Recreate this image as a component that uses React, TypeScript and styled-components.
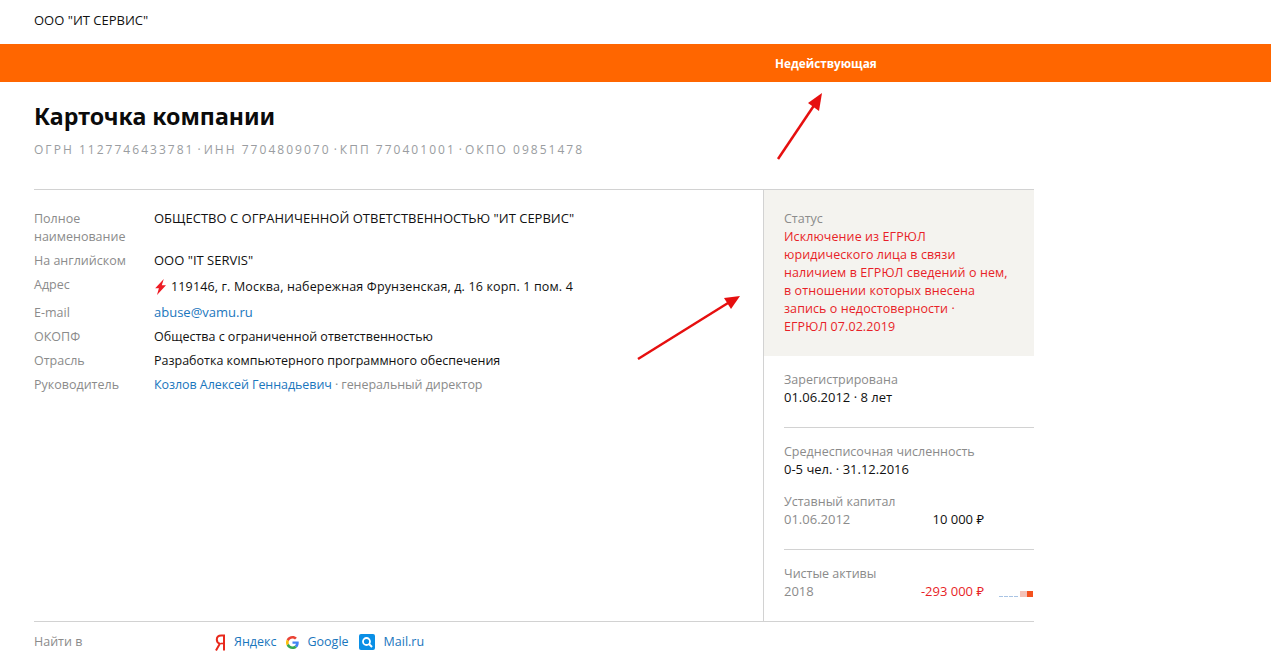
import React from "react";
import styled, { createGlobalStyle } from "styled-components";

const Global = createGlobalStyle`
  html, body { margin: 0; padding: 0; background: #fff; overflow: hidden; }
  body { font-family: "Open Sans", "Noto Sans", sans-serif; font-size: 12.5px; line-height: 18px; color: #111; }
`;

const Page = styled.div`
  position: relative;
  width: 1271px;
  height: 670px;
  overflow: hidden;
`;
const Wrap = styled.div`
  width: 1000px;
  margin-left: 34px;
`;
const TopBar = styled(Wrap)`
  height: 44px;
  display: flex;
  align-items: center;
  padding-bottom: 4px;
  box-sizing: border-box;
  font-size: 13px;
`;
const Banner = styled.div`
  height: 38px;
  background: #ff6600;
  color: #fff;
  font-size: 11.75px;
  font-weight: 700;
  display: flex;
  align-items: center;
  padding-left: 775px;
  box-sizing: border-box;
`;
const Title = styled.h1`
  margin: 18px 0 0;
  font-family: "Noto Sans", sans-serif;
  font-size: 23.2px;
  line-height: 32px;
  font-weight: 700;
  color: #0b0b0b;
`;
const Codes = styled.div`
  margin-top: 9px;
  font-size: 12px;
  letter-spacing: 2.03px;
  color: #9a9da1;
`;
const Sep = styled.span`
  margin: 0 3px;
  letter-spacing: 0;
`;
const Main = styled(Wrap)`
  margin-top: 30px;
  border-top: 1px solid #d2d2d2;
  border-bottom: 1px solid #d2d2d2;
  display: grid;
  grid-template-columns: 730px 270px;
  height: 431px;
`;
const Details = styled.div`
  padding-top: 20px;
  border-right: 1px solid #d2d2d2;
  display: flex;
  flex-direction: column;
  gap: 6px;
`;
const Row = styled.div`
  display: grid;
  grid-template-columns: 120px 1fr;
`;
const Label = styled.div`
  color: #8b8b8b;
`;
const Value = styled.div<{ $caps?: boolean }>`
  display: flex;
  align-items: flex-start;
  white-space: pre;
  font-size: ${(p) => (p.$caps ? "13px" : "inherit")};
  line-height: ${(p) => (p.$caps ? "16px" : "18px")};
  padding-bottom: ${(p) => (p.$caps ? "2px" : "0")};
`;
const AddressValue = styled(Value)`
  padding: 2px 0;
  align-items: center;
  letter-spacing: 0.15px;
`;
const Bolt = styled.svg`
  margin: -1px 4px 0 0;
  flex: none;
`;
const Link = styled.span`
  color: #1a76bd;
`;
const PersonValue = styled(Value)`
  letter-spacing: -0.07px;
`;
const Muted = styled.span`
  color: #8b8b8b;
`;
const Side = styled.div`
  display: flex;
  flex-direction: column;
`;
const StatusPanel = styled.div`
  background: #f4f3ef;
  padding: 20px 20px;
  height: 166px;
  box-sizing: border-box;
`;
const StatusText = styled.div`
  color: #e81f28;
  white-space: pre-line;
  letter-spacing: 0.08px;
`;
const Section = styled.div<{ $last?: boolean }>`
  margin-left: 20px;
  padding: 15px 0 20px;
  display: flex;
  flex-direction: column;
  gap: 14px;
  border-bottom: ${(p) => (p.$last ? "none" : "1px solid #d2d2d2")};
`;
const Fact = styled.div``;
const FactValue = styled.div`
  font-size: 13px;
  line-height: 16px;
  padding-bottom: 2px;
`;
const FactLine = styled(FactValue)`
  display: flex;
  align-items: center;
`;
const Year = styled.span`
  color: #8b8b8b;
  width: 100px;
`;
const Amount = styled.span<{ $red?: boolean }>`
  width: 100px;
  text-align: right;
  color: ${(p) => (p.$red ? "#e81f28" : "#111")};
`;
const Spark = styled.svg`
  margin: 5px 0 0 14px;
  flex: none;
`;
const Search = styled(Wrap)`
  display: grid;
  grid-template-columns: 180px 1fr;
  padding-top: 11px;
`;
const Engines = styled.div`
  display: flex;
  align-items: center;
`;
const Engine = styled.span<{ $gap: number; $inner: number }>`
  display: flex;
  align-items: center;
  gap: ${(p) => p.$inner}px;
  margin-right: ${(p) => p.$gap}px;
`;
const Arrow = styled.svg`
  position: absolute;
  left: 0;
  top: 0;
  pointer-events: none;
`;

const YandexIcon = () => (
  <svg width="12" height="17" viewBox="0 0 12 17">
    <path d="M10 16.500V1.500H7.200C4.400 1.500 2.800 3 2.800 5.500c0 2.200 1 3.500 3 4.300L2 16.500" fill="none" stroke="#e8291c" strokeWidth="2" />
    <path d="M10 9.500H7" fill="none" stroke="#e8291c" strokeWidth="1.600" />
  </svg>
);
const GoogleIcon = () => (
  <svg width="13" height="13" viewBox="0 0 48 48">
    <path fill="#EA4335" d="M24 9.500c3.500 0 6.700 1.200 9.200 3.600l6.900-6.900C35.900 2.400 30.500 0 24 0 14.600 0 6.500 5.400 2.600 13.200l8 6.200C12.500 13.600 17.800 9.500 24 9.500z" />
    <path fill="#4285F4" d="M47 24.500c0-1.600-.1-3.100-.4-4.500H24v9h12.900c-.6 3-2.200 5.500-4.700 7.200l7.700 6C44.400 38.500 47 32 47 24.500z" />
    <path fill="#FBBC05" d="M10.600 28.600c-.5-1.400-.8-3-.8-4.600s.3-3.200.8-4.600l-8-6.200C.9 16.500 0 20.100 0 24s.9 7.500 2.600 10.800l8-6.200z" />
    <path fill="#34A853" d="M24 48c6.500 0 11.900-2.100 15.900-5.800l-7.700-6c-2.200 1.500-4.900 2.300-8.200 2.300-6.200 0-11.500-4.100-13.400-9.900l-8 6.200C6.500 42.600 14.600 48 24 48z" />
  </svg>
);
const MailIcon = () => (
  <svg width="16" height="16" viewBox="0 0 16 16">
    <rect width="16" height="16" rx="2" fill="#0a8fe6" />
    <circle cx="7.500" cy="7.500" r="3.500" fill="none" stroke="#fff" strokeWidth="1.800" />
    <path d="M10 10l3 3" stroke="#fff" strokeWidth="2" />
  </svg>
);

export default function App() {
  return (
    <Page>
      <Global />
      <TopBar>ООО "ИТ СЕРВИС"</TopBar>
      <Banner>Недействующая</Banner>
      <Wrap>
        <Title>Карточка компании</Title>
        <Codes>
          ОГРН 1127746433781<Sep>·</Sep>ИНН 7704809070<Sep>·</Sep>КПП 770401001<Sep>·</Sep>ОКПО 09851478
        </Codes>
      </Wrap>
      <Main>
        <Details>
          <Row>
            <Label>Полное<br />наименование</Label>
            <Value $caps>ОБЩЕСТВО С ОГРАНИЧЕННОЙ ОТВЕТСТВЕННОСТЬЮ "ИТ СЕРВИС"</Value>
          </Row>
          <Row>
            <Label>На английском</Label>
            <Value $caps>ООО "IT SERVIS"</Value>
          </Row>
          <Row>
            <Label>Адрес</Label>
            <AddressValue>
              <Bolt width="13" height="16" viewBox="0 0 13 16">
                <path d="M9.800 0L1.200 9.200h3.700L3 16 12 6.200H7.800z" fill="#ee1c25" />
              </Bolt>
              119146, г. Москва, набережная Фрунзенская, д. 16 корп. 1 пом. 4
            </AddressValue>
          </Row>
          <Row>
            <Label>E-mail</Label>
            <Value $caps><Link>abuse@vamu.ru</Link></Value>
          </Row>
          <Row>
            <Label>ОКОПФ</Label>
            <Value>Общества с ограниченной ответственностью</Value>
          </Row>
          <Row>
            <Label>Отрасль</Label>
            <Value>Разработка компьютерного программного обеспечения</Value>
          </Row>
          <Row>
            <Label>Руководитель</Label>
            <PersonValue><Link>Козлов Алексей Геннадьевич</Link><Muted> · генеральный директор</Muted></PersonValue>
          </Row>
        </Details>
        <Side>
          <StatusPanel>
            <Label>Статус</Label>
            <StatusText>{"Исключение из ЕГРЮЛ\nюридического лица в связи\nналичием в ЕГРЮЛ сведений о нем,\nв отношении которых внесена\nзапись о недостоверности ·\nЕГРЮЛ 07.02.2019"}</StatusText>
          </StatusPanel>
          <Section>
            <Fact>
              <Label>Зарегистрирована</Label>
              <FactValue>01.06.2012 · 8 лет</FactValue>
            </Fact>
          </Section>
          <Section>
            <Fact>
              <Label>Среднесписочная численность</Label>
              <FactValue>0-5 чел. · 31.12.2016</FactValue>
            </Fact>
            <Fact>
              <Label>Уставный капитал</Label>
              <FactLine><Year>01.06.2012</Year><Amount>10 000 ₽</Amount></FactLine>
            </Fact>
          </Section>
          <Section $last>
            <Fact>
              <Label>Чистые активы</Label>
              <FactLine>
                <Year>2018</Year>
                <Amount $red>-293 000 ₽</Amount>
                <Spark width="36" height="6" viewBox="0 0 36 6">
                  <path d="M1 5.500H21" stroke="#a9c4e4" strokeWidth="1" strokeDasharray="4 1" />
                  <rect x="22" y="0" width="7" height="6" fill="#f4c2b8" />
                  <rect x="29" y="0" width="6" height="6" fill="#f4511e" />
                </Spark>
              </FactLine>
            </Fact>
          </Section>
        </Side>
      </Main>
      <Search>
        <Label>Найти в</Label>
        <Engines>
          <Engine $gap={10} $inner={8}><YandexIcon /><Link>Яндекс</Link></Engine>
          <Engine $gap={10} $inner={8}><GoogleIcon /><Link>Google</Link></Engine>
          <Engine $gap={0} $inner={9}><MailIcon /><Link>Mail.ru</Link></Engine>
        </Engines>
      </Search>
      <Arrow width="1271" height="670" viewBox="0 0 1271 670">
        <path d="M778 159L815 104" stroke="#e60f0f" strokeWidth="2.500" fill="none" />
        <path d="M822 93L819 111 808 103z" fill="#e60f0f" />
        <path d="M638 359L728 303" stroke="#e60f0f" strokeWidth="2.500" fill="none" />
        <path d="M740 296L731 309 724 298z" fill="#e60f0f" />
      </Arrow>
    </Page>
  );
}
